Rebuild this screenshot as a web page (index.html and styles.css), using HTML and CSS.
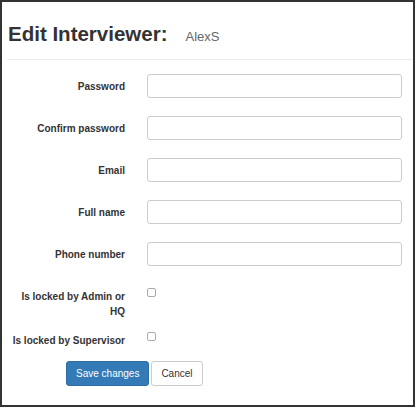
FILE: index.html
```html
<!DOCTYPE html>
<html>
<head>
<meta charset="utf-8">
<link rel="stylesheet" href="styles.css">
</head>
<body>
<div class="frame">
  <div class="header">
    <h1 class="title">Edit Interviewer:<span class="user">AlexS</span></h1>
  </div>
  <div class="rule"></div>
  <form class="form">
    <div class="row">
      <label class="label">Password</label>
      <input class="input" type="password">
    </div>
    <div class="row">
      <label class="label">Confirm password</label>
      <input class="input" type="password">
    </div>
    <div class="row">
      <label class="label">Email</label>
      <input class="input" type="text">
    </div>
    <div class="row">
      <label class="label">Full name</label>
      <input class="input" type="text">
    </div>
    <div class="row row-last">
      <label class="label">Phone number</label>
      <input class="input" type="text">
    </div>
    <div class="row check-row check-first">
      <label class="label label-top">Is locked by Admin or HQ</label>
      <div class="check-cell"><input class="check" type="checkbox"></div>
    </div>
    <div class="row check-row check-second">
      <label class="label label-top">Is locked by Supervisor</label>
      <div class="check-cell"><input class="check" type="checkbox"></div>
    </div>
    <div class="actions">
      <button type="button" class="btn btn-primary">Save changes</button>
      <button type="button" class="btn btn-default">Cancel</button>
    </div>
  </form>
</div>
</body>
</html>
```

FILE: styles.css
```css
html, body {
  margin: 0;
  padding: 0;
  background: #fff;
}

body {
  font-family: "Liberation Sans", Arial, sans-serif;
  color: #333;
}

.frame {
  width: 411px;
  height: 403px;
  border: 2px solid #333;
  background: #fff;
}

.header {
  padding: 20px 0 0 6px;
}

.title {
  margin: 0;
  font-size: 20.5px;
  line-height: 24px;
  font-weight: bold;
  color: #333;
}

.user {
  margin-left: 18px;
  font-size: 13px;
  line-height: 13px;
  font-weight: normal;
  color: #666;
}

.rule {
  margin: 13px 0 0 5px;
  height: 1px;
  background: #eee;
}

.form {
  padding: 14px 0 0 7px;
}

.row {
  display: grid;
  grid-template-columns: 116px 255px;
  column-gap: 22px;
  align-items: center;
  margin-bottom: 18px;
}

.row-last {
  margin-bottom: 23px;
}

.label {
  font-size: 10px;
  font-weight: bold;
  line-height: 15px;
  text-align: right;
  color: #333;
}

.label-top {
  align-self: start;
}

.input {
  box-sizing: border-box;
  width: 255px;
  height: 24px;
  margin: 0;
  border: 1px solid #ccc;
  border-radius: 3px;
  background: #fff;
  padding: 0 8px;
}

.check-row {
  align-items: start;
}

.check-first {
  margin-bottom: 14px;
}

.check-second {
  margin-bottom: 13px;
}

.check-cell {
  display: flex;
}

.check {
  appearance: none;
  -webkit-appearance: none;
  box-sizing: border-box;
  width: 9px;
  height: 9px;
  margin: -1px 0 0 0;
  border: 1px solid #aaa;
  border-radius: 2px;
  background: #fff;
}

.actions {
  display: flex;
  gap: 2px;
  padding-left: 57px;
}

.btn {
  box-sizing: border-box;
  height: 25px;
  margin: 0;
  padding: 0 9px;
  border: 1px solid;
  border-radius: 3px;
  font-family: "Liberation Sans", Arial, sans-serif;
  font-size: 10px;
  line-height: 23px;
}

.btn-primary {
  background: #337ab7;
  border-color: #2e6da4;
  color: #fff;
}

.btn-default {
  background: #fff;
  border-color: #ccc;
  color: #333;
}
```
